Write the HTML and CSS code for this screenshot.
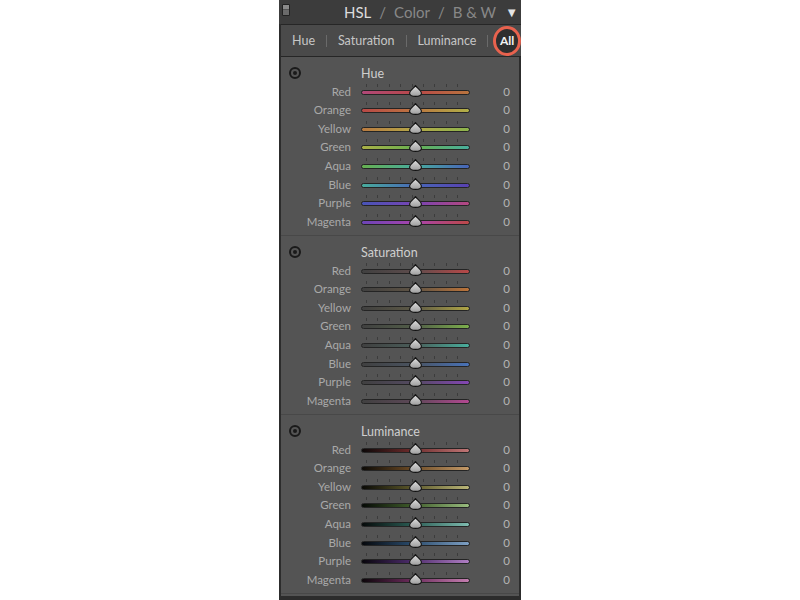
FILE: index.html
```html
<!DOCTYPE html>
<html>
<head>
<meta charset="utf-8">
<link rel="stylesheet" href="styles.css">
</head>
<body>
<svg class="defs" width="0" height="0">
  <defs>
    <linearGradient id="tg" x1="0" y1="0" x2="0" y2="1">
      <stop offset="0" stop-color="#e2e2e2"/>
      <stop offset="1" stop-color="#9c9c9c"/>
    </linearGradient>
    <symbol id="thumb" viewBox="0 0 13 12">
      <path d="M6.5 0.6 C8 3 12.4 5.4 12.4 8.2 C12.4 10.4 10 11.4 6.5 11.4 C3 11.4 0.6 10.4 0.6 8.2 C0.6 5.4 5 3 6.5 0.6 Z" fill="url(#tg)" stroke="#121212" stroke-width="1.1"/>
    </symbol>
  </defs>
</svg>
<div class="panel">
  <div class="header">
    <span class="toggle"></span>
    <span class="title"><b>HSL</b><i>/</i>Color<i>/</i>B &amp; W</span>
    <span class="collapse">▼</span>
  </div>
  <div class="tabs">
    <span class="tab">Hue</span><span class="sep"></span>
    <span class="tab">Saturation</span><span class="sep"></span>
    <span class="tab">Luminance</span><span class="sep"></span>
    <span class="tab all">All</span>
  </div>
  <div class="content">
    <section class="group hue">
      <div class="ghead"><span class="target"></span><span class="gtitle">Hue</span></div>
      <div class="row"><span class="lbl">Red</span><span class="track red"><svg class="thumb"><use href="#thumb"/></svg></span><span class="val">0</span></div>
      <div class="row"><span class="lbl">Orange</span><span class="track orange"><svg class="thumb"><use href="#thumb"/></svg></span><span class="val">0</span></div>
      <div class="row"><span class="lbl">Yellow</span><span class="track yellow"><svg class="thumb"><use href="#thumb"/></svg></span><span class="val">0</span></div>
      <div class="row"><span class="lbl">Green</span><span class="track green"><svg class="thumb"><use href="#thumb"/></svg></span><span class="val">0</span></div>
      <div class="row"><span class="lbl">Aqua</span><span class="track aqua"><svg class="thumb"><use href="#thumb"/></svg></span><span class="val">0</span></div>
      <div class="row"><span class="lbl">Blue</span><span class="track blue"><svg class="thumb"><use href="#thumb"/></svg></span><span class="val">0</span></div>
      <div class="row"><span class="lbl">Purple</span><span class="track purple"><svg class="thumb"><use href="#thumb"/></svg></span><span class="val">0</span></div>
      <div class="row"><span class="lbl">Magenta</span><span class="track magenta"><svg class="thumb"><use href="#thumb"/></svg></span><span class="val">0</span></div>
    </section>
    <section class="group sat">
      <div class="ghead"><span class="target"></span><span class="gtitle">Saturation</span></div>
      <div class="row"><span class="lbl">Red</span><span class="track red"><svg class="thumb"><use href="#thumb"/></svg></span><span class="val">0</span></div>
      <div class="row"><span class="lbl">Orange</span><span class="track orange"><svg class="thumb"><use href="#thumb"/></svg></span><span class="val">0</span></div>
      <div class="row"><span class="lbl">Yellow</span><span class="track yellow"><svg class="thumb"><use href="#thumb"/></svg></span><span class="val">0</span></div>
      <div class="row"><span class="lbl">Green</span><span class="track green"><svg class="thumb"><use href="#thumb"/></svg></span><span class="val">0</span></div>
      <div class="row"><span class="lbl">Aqua</span><span class="track aqua"><svg class="thumb"><use href="#thumb"/></svg></span><span class="val">0</span></div>
      <div class="row"><span class="lbl">Blue</span><span class="track blue"><svg class="thumb"><use href="#thumb"/></svg></span><span class="val">0</span></div>
      <div class="row"><span class="lbl">Purple</span><span class="track purple"><svg class="thumb"><use href="#thumb"/></svg></span><span class="val">0</span></div>
      <div class="row"><span class="lbl">Magenta</span><span class="track magenta"><svg class="thumb"><use href="#thumb"/></svg></span><span class="val">0</span></div>
    </section>
    <section class="group lum">
      <div class="ghead"><span class="target"></span><span class="gtitle">Luminance</span></div>
      <div class="row"><span class="lbl">Red</span><span class="track red"><svg class="thumb"><use href="#thumb"/></svg></span><span class="val">0</span></div>
      <div class="row"><span class="lbl">Orange</span><span class="track orange"><svg class="thumb"><use href="#thumb"/></svg></span><span class="val">0</span></div>
      <div class="row"><span class="lbl">Yellow</span><span class="track yellow"><svg class="thumb"><use href="#thumb"/></svg></span><span class="val">0</span></div>
      <div class="row"><span class="lbl">Green</span><span class="track green"><svg class="thumb"><use href="#thumb"/></svg></span><span class="val">0</span></div>
      <div class="row"><span class="lbl">Aqua</span><span class="track aqua"><svg class="thumb"><use href="#thumb"/></svg></span><span class="val">0</span></div>
      <div class="row"><span class="lbl">Blue</span><span class="track blue"><svg class="thumb"><use href="#thumb"/></svg></span><span class="val">0</span></div>
      <div class="row"><span class="lbl">Purple</span><span class="track purple"><svg class="thumb"><use href="#thumb"/></svg></span><span class="val">0</span></div>
      <div class="row"><span class="lbl">Magenta</span><span class="track magenta"><svg class="thumb"><use href="#thumb"/></svg></span><span class="val">0</span></div>
    </section>
  </div>
</div>
</body>
</html>
```

FILE: styles.css
```css
* { box-sizing: border-box; }
html, body { margin: 0; padding: 0; background: #ffffff; }
body { font-family: "Lato", "Open Sans", sans-serif; }

.defs { position: absolute; width: 0; height: 0; overflow: hidden; }

.panel {
  margin-left: 279px;
  width: 242px;
  height: 600px;
  background: #2c2c2c;
  display: flex;
  flex-direction: column;
}

.header {
  height: 24px;
  background: #3c3c3c;
  display: flex;
  align-items: center;
  padding: 0 3px 0 3px;
}
.toggle {
  width: 8px;
  height: 12px;
  margin-top: -5px;
  border-radius: 1px;
  background: linear-gradient(#8a8a8a 0 45%, #555 45% 55%, #6a6a6a 55%);
  border: 1px solid #222;
}
.title {
  margin-left: auto;
  font-size: 15px;
  color: #888888;
}
.title b { font-weight: 400; color: #dcdcdc; }
.title i { font-style: normal; margin: 0 8px; }
.collapse {
  margin-left: 9px;
  font-size: 13px;
  color: #e4e4e4;
}

.tabs {
  height: 33px;
  margin-left: 2px;
  background: #4a4a4a;
  border-top: 1px solid #262626;
  border-bottom: 1px solid #262626;
  display: flex;
  align-items: center;
  padding-left: 11px;
  font-size: 12.5px;
  color: #c6c6c6;
}
.sep {
  width: 1px;
  height: 12px;
  background: #6a6a6a;
  margin: 0 11px;
}
.tab.all {
  width: 30px;
  height: 30px;
  border-radius: 50%;
  border: 3px solid #e8624e;
  background: #2e2e2e;
  color: #f2f2f2;
  font-weight: 700;
  font-size: 12px;
  display: flex;
  align-items: center;
  justify-content: center;
  margin-left: -6px;
}

.content {
  flex: 1;
  margin: 0 2px 4px 2px;
  background: #545454;
  display: flex;
  flex-direction: column;
}

.group {
  height: 179px;
  padding-top: 7px;
  border-bottom: 1px solid #484848;
}

.ghead {
  height: 18px;
  display: grid;
  grid-template-columns: 70px 1fr;
  column-gap: 10px;
  align-items: center;
}
.target {
  width: 12px;
  height: 12px;
  border-radius: 50%;
  border: 2px solid #1a1a1a;
  margin-left: 8px;
  display: flex;
  align-items: center;
  justify-content: center;
}
.target::after {
  content: "";
  width: 4px;
  height: 4px;
  border-radius: 50%;
  background: #1a1a1a;
}
.gtitle {
  font-size: 12.5px;
  color: #cfcfcf;
}

.row {
  height: 18.57px;
  display: grid;
  grid-template-columns: 70px 109px 1fr;
  column-gap: 10px;
  align-items: center;
}
.lbl {
  text-align: right;
  font-size: 11.5px;
  color: #a9a9a9;
}
.val {
  text-align: right;
  padding-right: 9px;
  font-size: 11.5px;
  color: #b4b4b4;
}

.track {
  position: relative;
  height: 5px;
  margin-top: 2px;
  border-radius: 3px;
  border: 1px solid #242424;
}
.track::before {
  content: "";
  position: absolute;
  left: 4px;
  right: 4px;
  top: -7px;
  height: 3px;
  background: repeating-linear-gradient(90deg, #3c3c3c 0 1px, transparent 1px 11.4px);
}
.thumb {
  position: absolute;
  left: 47px;
  top: -6px;
  width: 13px;
  height: 12px;
  overflow: visible;
}

/* Hue */
.hue .red     { background: linear-gradient(90deg, #b04878, #b84848 50%, #b8743e); }
.hue .orange  { background: linear-gradient(90deg, #b84846, #bc7640 50%, #b0b048); }
.hue .yellow  { background: linear-gradient(90deg, #b87a40, #b4a848 50%, #8cb44c); }
.hue .green   { background: linear-gradient(90deg, #aab046, #68b050 50%, #48ae9c); }
.hue .aqua    { background: linear-gradient(90deg, #66b050, #48ac9e 50%, #4864b8); }
.hue .blue    { background: linear-gradient(90deg, #48ac9c, #4868b8 50%, #5840b0); }
.hue .purple  { background: linear-gradient(90deg, #4854b6, #7844b4 50%, #b44880); }
.hue .magenta { background: linear-gradient(90deg, #6c44b6, #a844ac 50%, #bc4848); }

/* Saturation */
.sat .red     { background: linear-gradient(90deg, #404040 0%, #5e4c4c 50%, #b84848); }
.sat .orange  { background: linear-gradient(90deg, #404040 0%, #605444 50%, #bc743a); }
.sat .yellow  { background: linear-gradient(90deg, #404040 0%, #5e5a46 50%, #b0a646); }
.sat .green   { background: linear-gradient(90deg, #404040 0%, #525e48 50%, #7caf4c); }
.sat .aqua    { background: linear-gradient(90deg, #404040 0%, #4a5e5a 50%, #48ae9c); }
.sat .blue    { background: linear-gradient(90deg, #404040 0%, #4a5462 50%, #4872b8); }
.sat .purple  { background: linear-gradient(90deg, #404040 0%, #544a62 50%, #8446b4); }
.sat .magenta { background: linear-gradient(90deg, #404040 0%, #5e4858 50%, #b44892); }

/* Luminance */
.lum .red     { background: linear-gradient(90deg, #0c0808, #6a2a2a 45%, #c07676); }
.lum .orange  { background: linear-gradient(90deg, #0c0a06, #684824 45%, #c49a68); }
.lum .yellow  { background: linear-gradient(90deg, #0a0a06, #585428 45%, #bab678); }
.lum .green   { background: linear-gradient(90deg, #060a06, #3c5828 45%, #98bc7e); }
.lum .aqua    { background: linear-gradient(90deg, #060a0a, #285850 45%, #7ebcb0); }
.lum .blue    { background: linear-gradient(90deg, #06080c, #284868 45%, #7ea0c4); }
.lum .purple  { background: linear-gradient(90deg, #08060c, #4a2a68 45%, #b07ec4); }
.lum .magenta { background: linear-gradient(90deg, #0c060a, #682a58 45%, #c47eb0); }
```
